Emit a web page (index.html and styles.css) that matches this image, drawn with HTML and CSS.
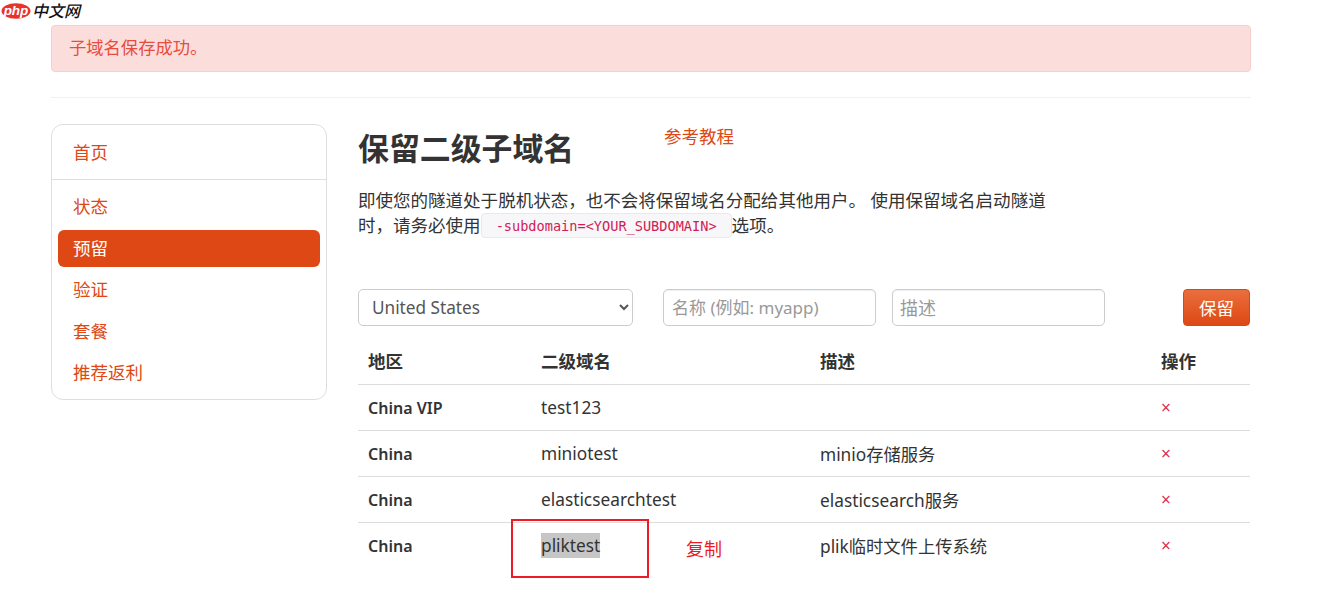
FILE: index.html
```html
<!DOCTYPE html>
<html lang="zh">
<head>
<meta charset="utf-8">
<title>保留二级子域名</title>
<link rel="stylesheet" href="styles.css">
</head>
<body>
<div class="watermark">
  <svg class="wm-logo" width="30" height="16" viewBox="0 0 30 16"><ellipse cx="15" cy="8" rx="14.5" ry="7.7" fill="#e8322c"/><text x="15" y="12" text-anchor="middle" class="wm-php">php</text></svg>
  <span class="wm-text">中文网</span>
</div>
<div class="page">
  <div class="alert">子域名保存成功。</div>
  <hr class="rule">
  <div class="layout">
    <nav class="side">
      <a class="side-home">首页</a>
      <div class="side-list">
        <a class="side-link">状态</a>
        <a class="side-link active">预留</a>
        <a class="side-link">验证</a>
        <a class="side-link">套餐</a>
        <a class="side-link">推荐返利</a>
      </div>
    </nav>
    <main class="main">
      <h1 class="title">保留二级子域名</h1>
      <p class="lead">即使您的隧道处于脱机状态，也不会将保留域名分配给其他用户。 使用保留域名启动隧道时，请务必使用<code class="code">-subdomain=&lt;YOUR_SUBDOMAIN&gt;</code>选项。</p>
      <form class="form">
        <select class="select"><option>United States</option></select>
        <input class="input input-name" placeholder="名称 (例如: myapp)">
        <input class="input input-desc" placeholder="描述">
        <button class="btn" type="button">保留</button>
      </form>
      <table class="table">
        <thead>
          <tr><th class="c1">地区</th><th class="c2">二级域名</th><th class="c3">描述</th><th>操作</th></tr>
        </thead>
        <tbody>
          <tr><td class="region">China VIP</td><td>test123</td><td></td><td class="del">×</td></tr>
          <tr><td class="region">China</td><td>miniotest</td><td>minio存储服务</td><td class="del">×</td></tr>
          <tr><td class="region">China</td><td>elasticsearchtest</td><td>elasticsearch服务</td><td class="del">×</td></tr>
          <tr><td class="region">China</td><td><span class="selected">pliktest</span></td><td>plik临时文件上传系统</td><td class="del">×</td></tr>
        </tbody>
      </table>
    </main>
  </div>
</div>
<a class="note-tutorial">参考教程</a>
<div class="note-box"></div>
<span class="note-copy">复制</span>
</body>
</html>
```
FILE: styles.css
```css
* { box-sizing: border-box; }
html, body { margin: 0; padding: 0; }
body {
  background: #fff;
  color: #333;
  font-family: "Noto Sans", "Noto Sans CJK SC", sans-serif;
  font-size: 17.3px;
  height: 603px;
  overflow: hidden;
  position: relative;
}
.watermark { position: absolute; left: 1px; top: 3px; display: flex; align-items: flex-start; height: 16px; gap: 2px; }
.wm-logo { display: block; }
.wm-php { font: italic 700 13.5px "Liberation Sans", sans-serif; fill: #fff; }
.wm-text { font: italic 500 16px "Noto Sans CJK SC", sans-serif; color: #111; line-height: 16px; margin: -1px 0 0 -1px; }
.page { width: 1200px; margin-left: 51px; padding-top: 25px; }
.alert {
  height: 47px;
  padding: 0 17px;
  line-height: 44px;
  background: #fbdedc;
  border: 1px solid #f7cfcd;
  border-radius: 4px;
  color: #e74c3c;
}
.rule { height: 1px; border: 0; background: #f1f1f1; margin: 25px 0 26px; }
.layout { display: flex; align-items: flex-start; gap: 31px; }
.side {
  width: 276px;
  flex: none;
  height: 276px;
  border: 1px solid #dedede;
  border-radius: 12px;
  font-size: 17.5px;
}
.side-home {
  display: block;
  height: 55px;
  padding-left: 21px;
  line-height: 55px;
  color: #dd4814;
  border-bottom: 1px solid #dedede;
}
.side-list { padding: 8px 6px 0; display: flex; flex-direction: column; gap: 4.5px; }
.side-link {
  display: block;
  height: 37px;
  padding-left: 15px;
  line-height: 37px;
  color: #dd4814;
  border-radius: 6px;
}
.side-link.active { background: #dd4814; color: #fff; }
.main { width: 892px; flex: none; }
.title { margin: 3px 0 0; font-size: 30.9px; line-height: 42px; font-weight: 700; color: #333; }
.lead { margin: 19px 0 0; width: 692px; line-height: 25px; font-size: 17.53px; color: #333; }
.code {
  display: inline-block;
  height: 25px;
  line-height: 24px;
  padding: 0 14px;
  vertical-align: 1px;
  font-family: "DejaVu Sans Mono", monospace;
  font-size: 13.6px;
  color: #d01c55;
  background: #f7f7f9;
  border: 1px solid #e8e8ee;
  border-radius: 4px;
}
.form { display: flex; align-items: center; margin-top: 51px; height: 37px; }
.select {
  width: 275px;
  height: 37px;
  padding: 0 9px;
  font: inherit;
  font-size: 17.2px;
  color: #555;
  background: #fff;
  border: 1px solid #ccc;
  border-radius: 5px;
}
.input {
  height: 37px;
  padding: 0 8px;
  font: inherit;
  font-size: 17px;
  color: #555;
  background: #fff;
  border: 1px solid #ccc;
  border-radius: 5px;
  box-shadow: inset 0 1px 1px rgba(0,0,0,.07);
}
.input::placeholder { color: #999; }
.input-name { width: 213px; margin-left: 30px; }
.input-desc { width: 213px; margin-left: 16px; padding-left: 7px; font-size: 18px; }
.btn {
  width: 67px;
  height: 37px;
  margin-left: auto;
  padding: 0;
  font: inherit;
  font-size: 17.5px;
  color: #fff;
  background: linear-gradient(#ea6f3e, #dd4814);
  border: 1px solid #d9480f;
  border-radius: 4px;
}
.table { width: 892px; table-layout: fixed; border-collapse: collapse; margin-top: 0; }
.table th, .table td { padding: 0 10px; text-align: left; }
.table th { height: 58px; padding-top: 12px; font-size: 17.5px; font-weight: 700; border-bottom: 1px solid #ddd; }
.table td { height: 46px; border-bottom: 1px solid #ddd; }
.table tbody tr:last-child td { border-bottom: 0; }
.c1 { width: 173px; }
.c2 { width: 279px; }
.c3 { width: 341px; }
.table td.region { font-size: 16px; font-weight: 600; padding-top: 1px; }
.table td.del { color: #d9305a; padding-top: 1px; }
.selected { background: #c6c6c6; display: inline-block; line-height: 25px; }
.note-tutorial { position: absolute; left: 664px; top: 124px; color: #dd4814; font-size: 17.5px; line-height: 24px; }
.note-box { position: absolute; left: 511px; top: 519px; width: 138px; height: 59px; border: 2px solid #ed1c24; }
.note-copy { position: absolute; left: 686px; top: 537px; color: #ed1c24; font-size: 18px; line-height: 24px; }
```
